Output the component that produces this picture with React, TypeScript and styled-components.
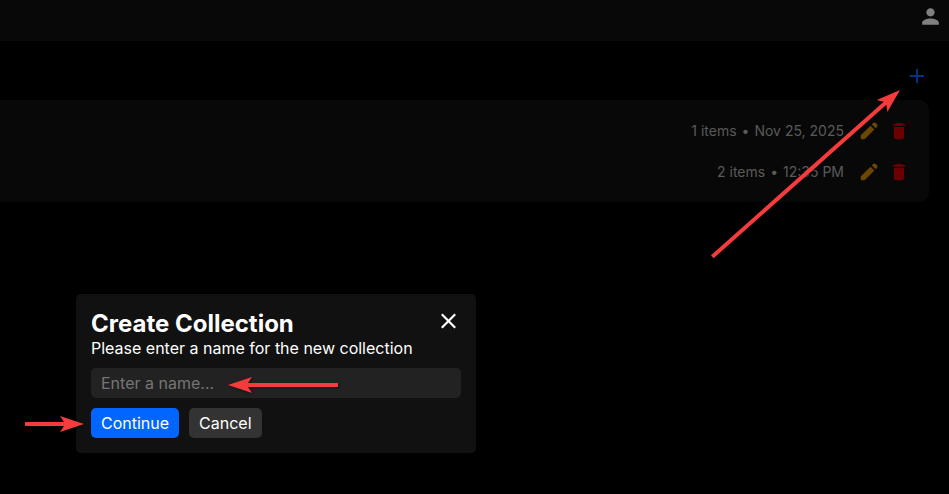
import React from "react";
import styled, { createGlobalStyle } from "styled-components";
import { MdPerson } from "react-icons/md";

const GlobalStyle = createGlobalStyle`
  * { box-sizing: border-box; }
  body {
    margin: 0;
    background: #000;
    color: #fff;
    font-family: Inter, "Liberation Sans", sans-serif;
    font-size: 16px;
  }
  button, input { font: inherit; }
`;

const Page = styled.div`
  position: relative;
  min-height: 100vh;
  overflow: hidden;
`;

const NavBar = styled.header`
  display: flex;
  justify-content: flex-end;
  height: 41px;
  padding: 4px 6px;
  background: #080808;
`;

const IconButton = styled.button<{ $color: string; $size: number }>`
  display: flex;
  flex: none;
  width: ${(p) => p.$size}px;
  height: ${(p) => p.$size}px;
  padding: 0;
  border: 0;
  background: none;
  color: ${(p) => p.$color};
  cursor: pointer;

  svg {
    width: 100%;
    height: 100%;
  }
`;

const Content = styled.main`
  padding-right: 20px;
`;

const Toolbar = styled.div`
  display: flex;
  justify-content: flex-end;
  padding: 23px 0 12px;
`;

const Collections = styled.ul`
  display: flex;
  flex-direction: column;
  margin: 0;
  padding: 10px 19px 10px 0;
  list-style: none;
  background: #080808;
  border-radius: 0 10px 10px 0;
`;

const CollectionRow = styled.li`
  display: flex;
  align-items: center;
  justify-content: flex-end;
  gap: 8px;
  height: 41px;
`;

const Meta = styled.span`
  display: flex;
  gap: 5px;
  margin-right: 6px;
  color: #5a5a5a;
  font-size: 14px;
  line-height: 20px;
`;

const Overlay = styled.div`
  position: absolute;
  inset: 0;
  display: flex;
  align-items: flex-end;
  padding: 0 76px 41px;
`;

const Dialog = styled.form`
  display: flex;
  flex-direction: column;
  width: 400px;
  max-width: 100%;
  padding: 15px;
  background: #111;
  border-radius: 5px;
`;

const DialogHeader = styled.div`
  display: flex;
  justify-content: space-between;
`;

const Title = styled.h2`
  margin: 0;
  font-size: 24px;
  font-weight: 700;
  line-height: 29px;
`;

const Message = styled.label`
  line-height: 20px;
`;

const NameInput = styled.input`
  width: 100%;
  height: 30px;
  margin: 10px 0;
  padding: 0 10px;
  border: 0;
  border-radius: 5px;
  outline: none;
  background: #222;
  color: #fff;

  &::placeholder {
    color: #757575;
  }
`;

const Actions = styled.div`
  display: flex;
  gap: 10px;
`;

const ActionButton = styled.button<{ $primary?: boolean }>`
  height: 30px;
  padding: 0 10px;
  border: 0;
  border-radius: 5px;
  background: ${(p) => (p.$primary ? "#0066ff" : "#333")};
  color: #fff;
  cursor: pointer;
`;

const Annotations = styled.svg`
  position: absolute;
  top: 0;
  left: 0;
  pointer-events: none;
  filter: drop-shadow(1px 1px 1px rgba(0, 0, 0, 0.5));
`;

const PlusIcon = () => (
  <svg viewBox="0 0 24 24" fill="none" stroke="currentColor" strokeWidth="2">
    <path d="M12 5V19M4.8 12H19" />
  </svg>
);

const CloseIcon = () => (
  <svg viewBox="0 0 24 24" fill="none" stroke="currentColor" strokeWidth="2.2">
    <path d="M4.8 5.3L18.2 18.7M18.2 5.3L4.8 18.7" />
  </svg>
);

const PencilIcon = () => (
  <svg viewBox="0 0 24 24" fill="currentColor">
    <path d="M4 21q-.425 0-.712-.288T3 20v-2.425q0-.4.15-.763t.425-.637L13.6 6.15l4.25 4.25L7.825 20.425q-.275.275-.637.425t-.763.15zM19.3 8.925l-4.25-4.2 1.4-1.4q.575-.575 1.413-.575t1.412.575l1.4 1.4q.575.575.6 1.388t-.55 1.387z" />
  </svg>
);

const TrashIcon = () => (
  <svg viewBox="0 0 24 24" fill="currentColor">
    <path d="M9.5 3.2h5q.7 0 1 1H17.6q1 0 1 1v1H5.4V5.2q0-1 1-1h2.1q.3-1 1-1zM6.4 7.5h11.2V18.5q0 2.6-2.6 2.6H9Q6.4 21.1 6.4 18.5z" />
  </svg>
);

type ArrowProps = { x: number; y: number; length: number; angle: number };

/* The tip sits at (x, y); the shaft trails behind it. */
const Arrow = ({ x, y, length, angle }: ArrowProps) => (
  <path
    transform={`translate(${x} ${y}) rotate(${angle})`}
    d={`M0 0L-24 -8L-20 -2H${-length}V2H-20L-24 8Z`}
  />
);

const collections = [
  { count: 1, date: "Nov 25, 2025" },
  { count: 2, date: "12:35 PM" },
];

export default function App() {
  return (
    <>
      <GlobalStyle />
      <Page>
        <NavBar>
          <IconButton type="button" aria-label="Account" $color="#808080" $size={25}>
            <MdPerson />
          </IconButton>
        </NavBar>
        <Content>
          <Toolbar>
            <IconButton type="button" aria-label="New collection" $color="#003380" $size={24}>
              <PlusIcon />
            </IconButton>
          </Toolbar>
          <Collections>
            {collections.map(({ count, date }) => (
              <CollectionRow key={date}>
                <Meta>
                  <span>{`${count} items`}</span>
                  <span>•</span>
                  <span>{date}</span>
                </Meta>
                <IconButton type="button" aria-label="Rename" $color="#6b4700" $size={22}>
                  <PencilIcon />
                </IconButton>
                <IconButton type="button" aria-label="Delete" $color="#6b0000" $size={22}>
                  <TrashIcon />
                </IconButton>
              </CollectionRow>
            ))}
          </Collections>
        </Content>
        <Overlay>
          <Dialog role="dialog" aria-labelledby="dialog-title" onSubmit={(e) => e.preventDefault()}>
            <DialogHeader>
              <Title id="dialog-title">Create Collection</Title>
              <IconButton type="button" aria-label="Close" $color="#fff" $size={24}>
                <CloseIcon />
              </IconButton>
            </DialogHeader>
            <Message htmlFor="name">Please enter a name for the new collection</Message>
            <NameInput id="name" type="text" placeholder="Enter a name..." />
            <Actions>
              <ActionButton type="submit" $primary>Continue</ActionButton>
              <ActionButton type="button">Cancel</ActionButton>
            </Actions>
          </Dialog>
        </Overlay>
        <Annotations width="949" height="494" viewBox="0 0 949 494" fill="#f53b3b" aria-hidden="true">
          <Arrow x={900} y={90} length={251} angle={-41.6} />
          <Arrow x={228} y={385} length={110} angle={180} />
          <Arrow x={84} y={424} length={59} angle={0} />
        </Annotations>
      </Page>
    </>
  );
}
